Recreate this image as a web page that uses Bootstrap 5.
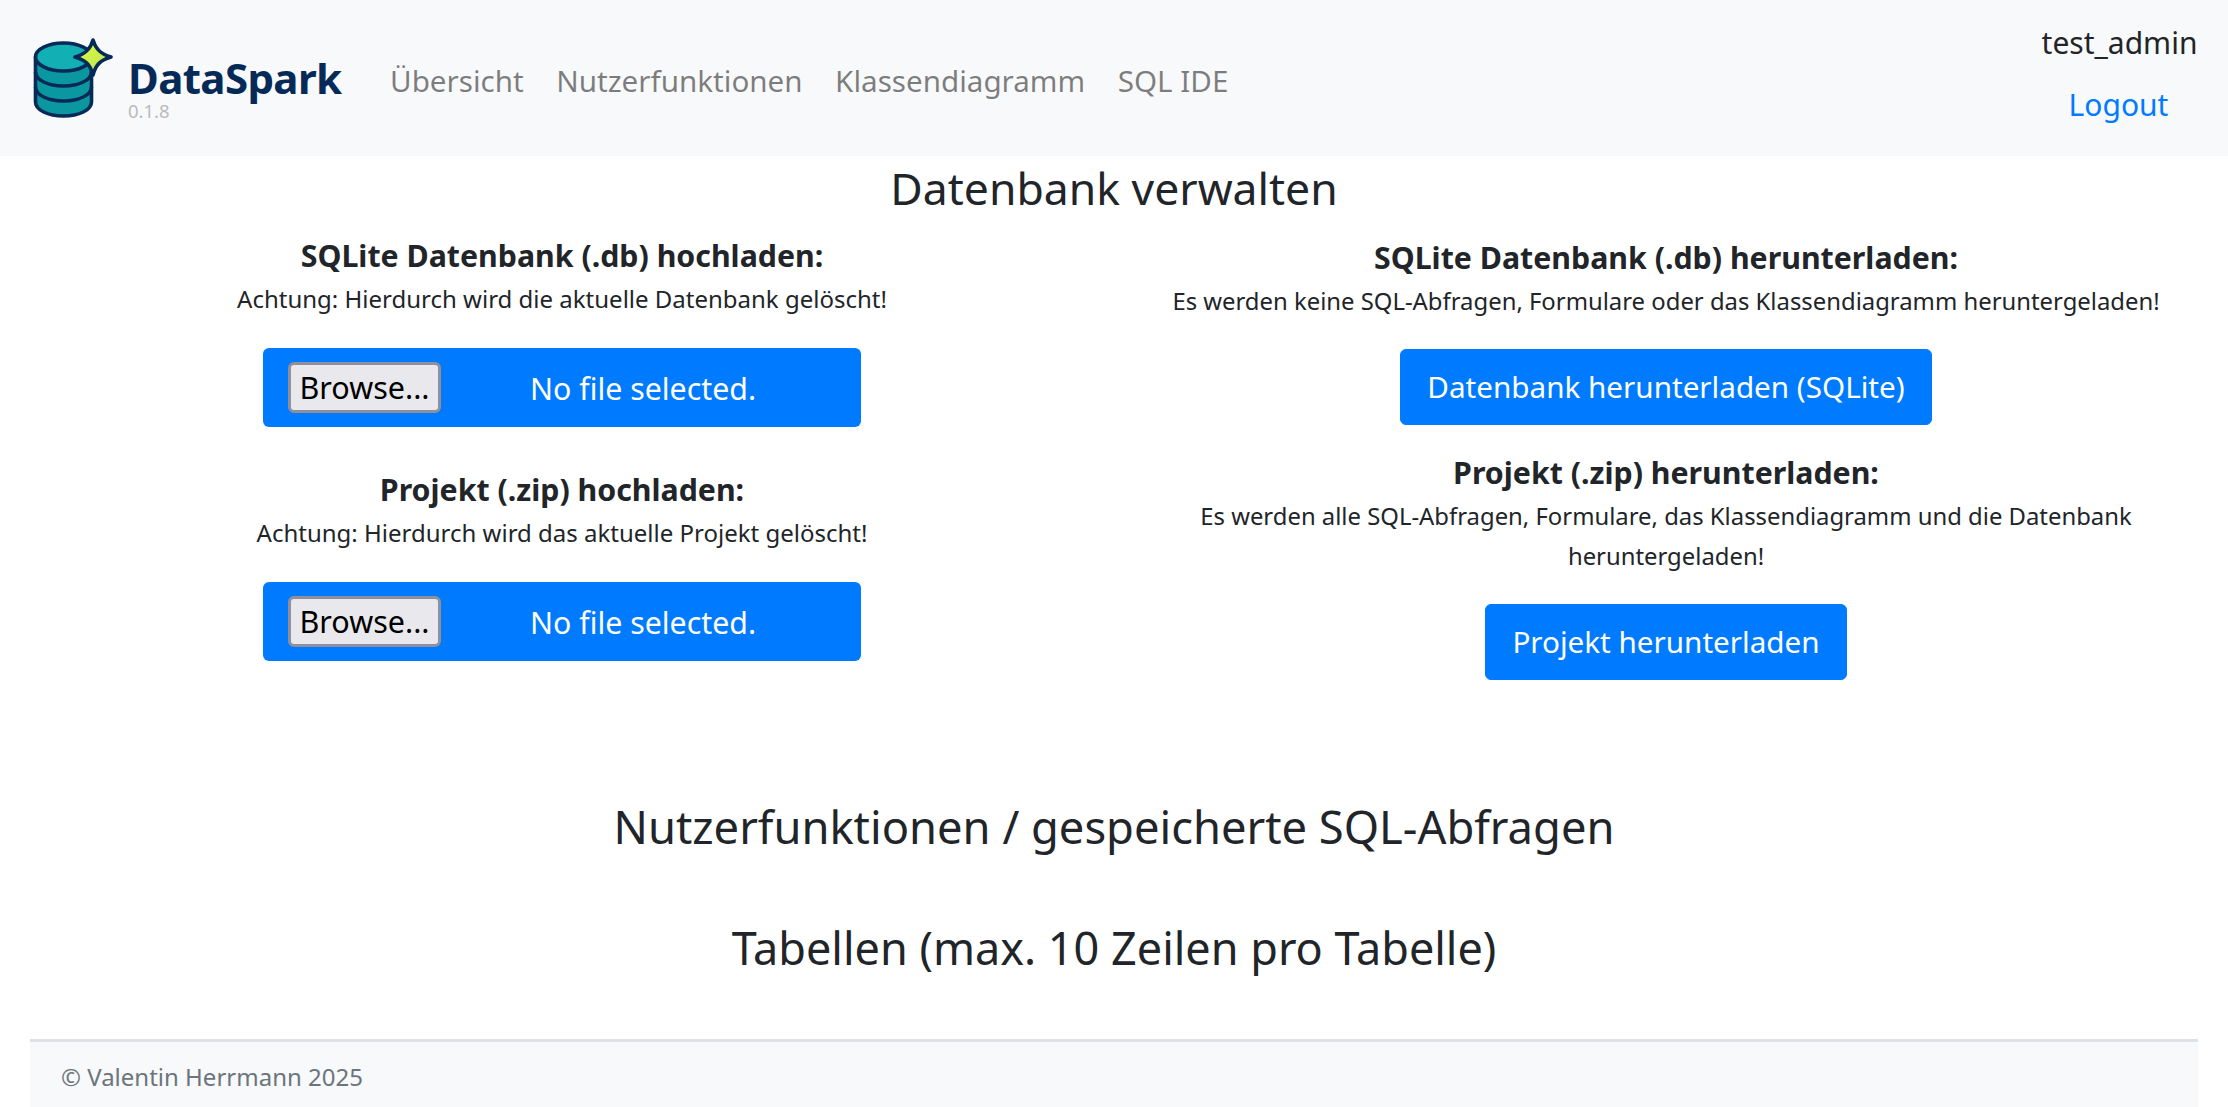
<!DOCTYPE html>
<html lang="de">
<head>
  <meta charset="UTF-8" />
  <meta name="viewport" content="width=device-width, initial-scale=1.0" />
  <title>DataSpark</title>
  <link href="https://cdn.jsdelivr.net/npm/bootstrap@5.3.3/dist/css/bootstrap.min.css" rel="stylesheet" />
  <style>
    html, body { height: 1107px; overflow: hidden; }
    body { font-family: "Noto Sans", "Open Sans", sans-serif; font-size: 24px; color: #212529; }
    .top-bar { height: 156px; background: #f8f9fa; padding: 0 30px 0 33px; }
    .brand-logo { width: 80px; height: 80px; flex: none; }
    .brand-text { margin-left: 15px; width: 262px; line-height: 1; padding-top: 19px; }
    .brand-name { font-size: 42px; font-weight: 700; color: #062a57; letter-spacing: -.6px; line-height: 42px; }
    .brand-version { font-size: 18.5px; color: #bbb; line-height: 17px; margin-top: 3px; }
    .top-link { font-size: 29.6px; color: rgba(0,0,0,.5); text-decoration: none; margin-right: 32.5px; padding-top: 6px; }
    .user-box { width: 157px; }
    .user-name { font-size: 30px; line-height: 38px; margin-top: 24px; white-space: nowrap; }
    .logout-link { font-size: 30px; color: #007bff; text-decoration: none; line-height: 40px; margin: 23px 2px 0 0; display: block; }
    .page-title { font-size: 44.5px; font-weight: 400; line-height: 60px; margin: 2px 0 0; }
    .section-title { font-size: 45.3px; font-weight: 400; line-height: 60px; margin: 0; }
    .side-l { width: 1104px; padding: 18px 0 0 20px; }
    .side-r { width: 1124px; padding-top: 20px; }
    .pane-head { font-size: 30.3px; font-weight: 700; line-height: 40px; margin: 0; }
    .pane-note { font-size: 24px; line-height: 40px; margin: 3px 0 0; }
    .side-r .pane-note { font-size: 23.87px; }
    .file-box { width: 598px; height: 79px; margin-top: 29px; background: #007bff; color: #fff; border-radius: 6px; font-size: 30.3px; padding-left: 25px; }
    .file-btn { width: 153px; height: 51px; background: #e9e9ed; border: 3px solid #8f8f9d; border-radius: 6px; color: #000; font-size: 30.5px; line-height: 1; padding: 0; font-family: "Noto Sans", sans-serif; }
    .file-label { flex: 1; text-align: center; padding: 3px 16px 0 0; }
    .gap-head { margin-top: 43px; }
    .dl-btn { background: #007bff; border-color: #007bff; font-size: 29.65px; height: 76px; padding: 0 26px; border-radius: 6px; margin-top: 28px; display: inline-flex; align-items: center; }
    .gap-head-r { margin-top: 28px; }
    .first-section { margin-top: 117px; }
    .next-section { margin-top: 61px; font-size: 45px; }
    .foot-bar { margin: auto 30px 0; height: 68px; background: #f8f9fa; border-top: 3px solid #dee2e6; padding: 20px 31px 0; color: #6c757d; font-size: 24px; line-height: 30px; }
  </style>
</head>
<body class="d-flex flex-column">

  <nav class="top-bar d-flex align-items-center">
    <svg class="brand-logo" viewBox="0 0 80 80">
      <defs>
        <linearGradient id="starFill" x1="0" y1="0" x2="1" y2="1">
          <stop offset="0" stop-color="#e4f93a"/>
          <stop offset="1" stop-color="#b4e65a"/>
        </linearGradient>
      </defs>
      <path d="M2.500 19V64c0 8 12.500 14 28 14s28-6 28-14V19z" fill="#0b97a0" stroke="#062a57" stroke-width="3.6" stroke-linejoin="round"/>
      <ellipse cx="30.500" cy="19" rx="28" ry="14" fill="#12b0b5" stroke="#062a57" stroke-width="3.6"/>
      <path d="M2.500 34c0 8 12.500 14 28 14s28-6 28-14M2.500 49c0 8 12.500 14 28 14s28-6 28-14" fill="none" stroke="#062a57" stroke-width="3.6"/>
      <path d="M60 2c2.500 9 7.500 14 18 17-10.500 3-15.500 8-18 18-2.500-10-7.500-15-18-18 10.500-3 15.500-8 18-17z" fill="url(#starFill)" stroke="#062a57" stroke-width="3.6" stroke-linejoin="round"/>
    </svg>
    <div class="brand-text">
      <div class="brand-name">DataSpark</div>
      <div class="brand-version">0.1.8</div>
    </div>
    <a class="top-link" href="#">Übersicht</a>
    <a class="top-link" href="#">Nutzerfunktionen</a>
    <a class="top-link" href="#">Klassendiagramm</a>
    <a class="top-link" href="#">SQL IDE</a>
    <div class="user-box ms-auto align-self-start text-center">
      <div class="user-name">test_admin</div>
      <a class="logout-link" href="#">Logout</a>
    </div>
  </nav>

  <h3 class="page-title text-center">Datenbank verwalten</h3>

  <div class="d-flex">
    <div class="side-l d-flex flex-column align-items-center">
      <h5 class="pane-head">SQLite Datenbank (.db) hochladen:</h5>
      <p class="pane-note">Achtung: Hierdurch wird die aktuelle Datenbank gelöscht!</p>
      <div class="file-box d-flex align-items-center">
        <button class="file-btn" type="button">Browse...</button>
        <span class="file-label">No file selected.</span>
      </div>
      <h5 class="pane-head gap-head">Projekt (.zip) hochladen:</h5>
      <p class="pane-note">Achtung: Hierdurch wird das aktuelle Projekt gelöscht!</p>
      <div class="file-box d-flex align-items-center">
        <button class="file-btn" type="button">Browse...</button>
        <span class="file-label">No file selected.</span>
      </div>
    </div>
    <div class="side-r d-flex flex-column align-items-center text-center">
      <h5 class="pane-head">SQLite Datenbank (.db) herunterladen:</h5>
      <p class="pane-note">Es werden keine SQL-Abfragen, Formulare oder das Klassendiagramm heruntergeladen!</p>
      <a class="btn btn-primary dl-btn" href="#">Datenbank herunterladen (SQLite)</a>
      <h5 class="pane-head gap-head-r">Projekt (.zip) herunterladen:</h5>
      <p class="pane-note">Es werden alle SQL-Abfragen, Formulare, das Klassendiagramm und die Datenbank<br>heruntergeladen!</p>
      <a class="btn btn-primary dl-btn" href="#">Projekt herunterladen</a>
    </div>
  </div>

  <h2 class="section-title text-center first-section">Nutzerfunktionen / gespeicherte SQL-Abfragen</h2>
  <h2 class="section-title text-center next-section">Tabellen (max. 10 Zeilen pro Tabelle)</h2>

  <footer class="foot-bar">© Valentin Herrmann 2025</footer>

</body>
</html>
